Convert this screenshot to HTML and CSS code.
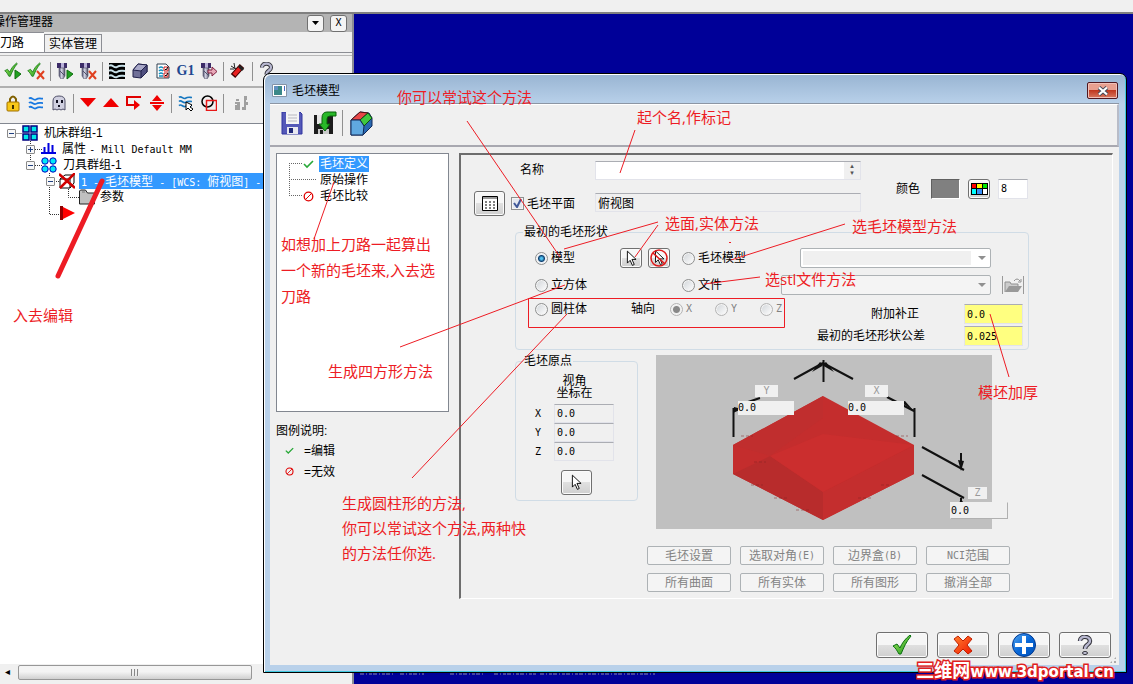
FILE: index.html
```html
<!DOCTYPE html>
<html lang="zh-CN">
<head>
<meta charset="utf-8">
<title>毛坯模型</title>
<link rel="stylesheet" href="styles.css">
</head>
<body>
<svg class="defs" aria-hidden="true">
  <defs>
    <linearGradient id="gGreen" x1="0" y1="0" x2="1" y2="1"><stop offset="0" stop-color="#a8f060"/><stop offset="1" stop-color="#189018"/></linearGradient>
    <linearGradient id="gBlue" x1="0" y1="0" x2="1" y2="1"><stop offset="0" stop-color="#58a8f0"/><stop offset=".5" stop-color="#0868d8"/><stop offset="1" stop-color="#0050b8"/></linearGradient>
    <linearGradient id="gRed" x1="0" y1="0" x2="1" y2="1"><stop offset="0" stop-color="#ff8030"/><stop offset="1" stop-color="#f01800"/></linearGradient>
    <linearGradient id="gTool" x1="0" y1="0" x2="1" y2="0"><stop offset="0" stop-color="#50506c"/><stop offset=".45" stop-color="#d8d8e8"/><stop offset="1" stop-color="#484860"/></linearGradient>
    <symbol id="tick" viewBox="0 0 20 20"><path d="M1 11l4-2 3 4C10 8 13 4 18 0l1 1C14 7 12 12 9 19H7C5 16 4 13 1 11z" fill="url(#gGreen)" stroke="#0a7010"/></symbol>
    <symbol id="bit" viewBox="0 0 12 16"><path d="M0 0h10v5H0z" fill="#3c2c68"/><path d="M4 0h3v5H4z" fill="#b8b0d8"/><path d="M2 5h6v8l-2 3H4l-2-3z" fill="url(#gTool)" stroke="#50506a" stroke-width=".6"/><path d="M3 8l4 4" stroke="#50506a"/></symbol>
    <symbol id="arrow" viewBox="0 0 12 18"><path d="M1.500 1v13l3-3 2.500 5.500 2-1L6.500 10H11z" fill="#fff" stroke="#000"/></symbol>
    <symbol id="query" viewBox="0 0 16 20"><path d="M3 6C3 0 13 1 13 6c0 4-5 3-5 8" fill="none" stroke="#303038" stroke-width="4.500"/><path d="M3 6C3 0 13 1 13 6c0 4-5 3-5 8" fill="none" stroke="#b8b8d0" stroke-width="2.500"/><ellipse cx="8" cy="18" rx="2.500" ry="1.500" fill="#c8c8dc" stroke="#303038"/></symbol>
    <symbol id="waves" viewBox="0 0 16 16"><path d="M0 3c3-3 5 3 8 1s5-1 8-1M0 8c3-3 5 3 8 1s5-1 8-1M0 13c3-3 5 3 8 1s5-1 8-1" fill="none" stroke="currentColor" stroke-width="2"/></symbol>
    <symbol id="ban" viewBox="0 0 11 11"><circle cx="5.500" cy="5.500" r="4.300" fill="none" stroke="#e00000" stroke-width="1.300"/><path d="M2.500 8.500l6-6" stroke="#e00000"/></symbol>
    <symbol id="check" viewBox="0 0 11 9"><path d="M1 4l3 3 6-6" fill="none" stroke="#28a838" stroke-width="1.600"/></symbol>
  </defs>
</svg>

<div class="app">
  <div class="app-strip"></div>
  <div class="workspace">
    <aside class="manager">
      <header class="manager-title">
        <span class="manager-name">操作管理器</span>
        <button class="mini" aria-label="菜单"><svg width="7" height="4"><path d="M0 0h7L3.500 4z"/></svg></button>
        <button class="mini mono">X</button>
      </header>
      <nav class="tabs">
        <button class="tab active">刀路</button><button class="tab">实体管理</button>
      </nav>
      <div class="tools">
        <button class="tool" aria-label="选择全部"><svg width="18" height="18"><use href="#tick" width="14" height="16"/><path d="M11 8l6 4-6 5z" fill="#20a020" stroke="#107010"/></svg></button>
        <button class="tool" aria-label="取消选择"><svg width="18" height="18"><use href="#tick" width="14" height="16"/><path d="M10 9l7 8M17 9l-7 8" stroke="#e04020" stroke-width="2"/></svg></button>
        <i class="sep"></i>
        <button class="tool" aria-label="重新计算"><svg width="18" height="18"><use href="#bit" x="1" y="1" width="12" height="16"/><path d="M11 8l6 4-6 5z" fill="#20a020" stroke="#107010"/></svg></button>
        <button class="tool" aria-label="重新计算无效"><svg width="18" height="18"><use href="#bit" x="1" y="1" width="12" height="16"/><path d="M10 9l7 8M17 9l-7 8" stroke="#e04020" stroke-width="2"/></svg></button>
        <i class="sep"></i>
        <button class="tool" aria-label="模拟"><svg width="16" height="16"><path fill="#000" d="M0 0h16v16H0z"/><use href="#waves" width="16" height="16" color="#c8e0e8"/></svg></button>
        <button class="tool" aria-label="验证"><svg width="16" height="16"><path d="M1 7l5-6 9 1v7l-6 6-8-1z" fill="#707098" stroke="#20204a"/><path d="M1 7l5-6 9 1-6 6z" fill="#a8a8c8" stroke="#20204a"/><path d="M9 8v7l6-6V2z" fill="#505080" stroke="#20204a"/></svg></button>
        <button class="tool" aria-label="选项"><svg width="14" height="16"><path d="M1 1h9l3 3v11H1z" fill="#fff" stroke="#304050"/><path d="M3 5q2-2 4 0M3 8q2-2 4 0M3 11q2-2 4 0M3 13h4" stroke="#1090c0" stroke-width="1.500" fill="none"/><path d="M8 4h4v4H8zM8 10h4v4H8z" fill="#fff" stroke="#d01818"/><path d="M9 6l1 1 2-3M9 12l1 1 2-3" stroke="#000" fill="none"/></svg></button>
        <button class="tool g1">G1</button>
        <button class="tool" aria-label="进给"><svg width="18" height="18"><use href="#bit" x="1" y="1" width="12" height="16"/><path d="M8 8h4V5l5 4.500-5 4.500v-3H8z" fill="#e8a8b8" stroke="#802040"/></svg></button>
        <i class="sep"></i>
        <button class="tool" aria-label="高速"><svg width="16" height="16"><path d="M3 13L12 3" stroke="#400" stroke-width="6"/><path d="M4 12l7-8" stroke="#e82020" stroke-width="4"/><path d="M9 3l4 4" stroke="#222" stroke-width="3"/><path d="M1 3l5 3M4 0l1 6M0 6h4" stroke="#222"/></svg></button>
        <i class="sep"></i>
        <button class="tool" aria-label="帮助"><svg width="15" height="18"><use href="#query" width="15" height="18"/></svg></button>
      </div>
      <div class="tools second">
        <button class="tool" aria-label="锁定"><svg width="14" height="17"><path d="M4 8V4q3-5 6 0v4" fill="none" stroke="#806000" stroke-width="2"/><rect x="1" y="7" width="12" height="9" rx="1" fill="#f8c818" stroke="#a07000"/><path d="M7 10v4" stroke="#403000" stroke-width="2"/></svg></button>
        <button class="tool" aria-label="显示刀路"><svg width="16" height="14"><use href="#waves" width="16" height="14" color="#1878e0"/></svg></button>
        <button class="tool" aria-label="隐藏后处理"><svg width="14" height="16"><path d="M1 15V6q0-5 6-5t6 5v9l-2-1-2 1-2-1-2 1-2-1z" fill="#d0d0e0" stroke="#505068"/><path d="M4 5h2v3H4zM9 5h2v3H9zM6 10h2v2H6z" fill="#101020"/></svg></button>
        <i class="sep"></i>
        <button class="tool" aria-label="下移"><svg width="16" height="10"><path d="M0 0h16L8 9z" fill="#f00000"/></svg></button>
        <button class="tool" aria-label="上移"><svg width="16" height="10"><path d="M0 9h16L8 0z" fill="#f00000"/></svg></button>
        <button class="tool" aria-label="插入"><svg width="16" height="16"><path d="M15 2H1v8h8" fill="none" stroke="#e00000" stroke-width="2"/><path d="M8 5l6 5-6 5z" fill="#f00000"/></svg></button>
        <button class="tool" aria-label="滚动"><svg width="16" height="16"><path d="M3 6l5-6 5 6zM3 10l5 6 5-6zM1 7h14v2H1z" fill="#f00000"/></svg></button>
        <i class="sep"></i>
        <button class="tool" aria-label="选择刀路"><svg width="16" height="16"><use href="#waves" width="15" height="13" color="#1878c0"/><path d="M8 7v8l2-2 3 3 2-2-3-2 2-2z" fill="#fff" stroke="#000"/></svg></button>
        <button class="tool" aria-label="选择图形"><svg width="16" height="16"><circle cx="6.500" cy="6.500" r="5.500" fill="none" stroke="#000" stroke-width="1.500"/><path d="M5.500 5.500h10v10h-10z" fill="none" stroke="#e81818" stroke-width="1.500"/></svg></button>
        <i class="sep wide-sep"></i>
        <button class="tool" aria-label="机床"><svg width="14" height="14" fill="#a0a0a0"><path d="M1 3h3v2H1zM0 6h5v8H0V9h2V8H0zM9 0h3v4h-1v2h2v3h-2v5H7v-3h2z"/></svg></button>
      </div>
      <div class="tree">
        <svg class="tree-lines" width="90" height="96"><path d="M15.500 8.500H22M30.500 16v26M35 24.500h7M35 40.500h7M49.500 48v41.500H60M54 56.500h6M68.500 64v8.500H79" fill="none" stroke="#333" stroke-dasharray="1 1"/></svg>
        <ul class="nodes">
          <li class="node l0"><button class="toggle" aria-label="折叠"><svg width="7" height="7"><path d="M1 3.500h5" stroke="#204080"/></svg></button><svg width="16" height="16"><path d="M1 1h6v6H1zM9 1h6v6H9zM1 9h6v6H1zM9 9h6v6H9z" fill="#00e8e8" stroke="#000080" stroke-width="1.500"/></svg><span>机床群组-1</span></li>
          <li class="node l1"><button class="toggle" aria-label="展开"><svg width="7" height="7"><path d="M1 3.500h5M3.500 1v5" stroke="#204080"/></svg></button><svg width="15" height="16"><path d="M0 12h15M3.500 12V6M7.500 12V2M11.500 12V4" stroke="#0000e0" stroke-width="2"/></svg><span>属性 <span class="mono">- Mill Default MM</span></span></li>
          <li class="node l1"><button class="toggle" aria-label="折叠"><svg width="7" height="7"><path d="M1 3.500h5" stroke="#204080"/></svg></button><svg width="16" height="16" fill="#00e8f8" stroke="#0000c0"><circle cx="4" cy="4" r="3.200"/><circle cx="12" cy="4" r="3.200"/><circle cx="4" cy="12" r="3.200"/><circle cx="12" cy="12" r="3.200"/></svg><span>刀具群组-1</span></li>
          <li class="node l2"><button class="toggle" aria-label="折叠"><svg width="7" height="7"><path d="M1 3.500h5" stroke="#204080"/></svg></button><svg width="16" height="16"><path d="M1 6l5-4h9v8l-4 5H1zM1 6h10v9M11 6l4-4" fill="#fff" stroke="#000"/><path d="M0 1l16 14M16 0L1 15" stroke="#d00000" stroke-width="2.500"/></svg><span class="picked"><span class="mono">1 - </span>毛坯模型<span class="mono"> - [WCS: </span>俯视图<span class="mono">] -</span></span></li>
          <li class="node l3"><svg width="17" height="16"><path d="M.5 15V2l1-1h5l2 3h7v11z" fill="#c0c0c0" stroke="#222"/><path d="M3 3h3" stroke="#777"/></svg><span>参数</span></li>
          <li class="node l2b"><svg width="16" height="16"><path d="M0 1h3v14H0z" fill="#900000"/><path d="M3 2l12 6-12 6z" fill="#f00"/></svg></li>
        </ul>
      </div>
      <div class="scroll"><span class="scroll-arrow">◂</span><div class="thumb"><i></i><i></i><i></i></div></div>
    </aside>
    <main class="canvas"></main>
  </div>
</div>
<svg class="status-marks" width="300" height="2"><path d="M0 1h34M40 1h24M90 1h35M134 1h42M180 1h115" stroke="#8a8aa8" stroke-width="1" stroke-dasharray="4 2 1 2 3 1"/></svg>

<section class="dialog" role="dialog" aria-labelledby="dlgTitle">
  <header class="titlebar">
    <svg width="15" height="13"><path d="M.5.5h14v12H.5z" fill="#fff" stroke="#8494a8"/><path d="M2 2h8v9H2z" fill="#3a8888"/><path d="M2 2h4v4H2z" fill="#6090c0"/><path d="M12.500 2v5" stroke="#4868c0"/></svg>
    <h1 id="dlgTitle">毛坯模型</h1>
    <button class="close" aria-label="关闭"><svg width="12" height="10"><path d="M2 1.500l8 7M10 1.500l-8 7" stroke="#404858" stroke-width="4"/><path d="M2 1.500l8 7M10 1.500l-8 7" stroke="#fff" stroke-width="2.300"/></svg></button>
  </header>
  <div class="client">
    <div class="dialog-tools">
      <button class="plain" aria-label="保存"><svg width="22" height="23"><path d="M1 0h18l2 2v20H1z" fill="#5458b8" stroke="#3034a0"/><path d="M5 0h13v12H5z" fill="#f4f4f4"/><path d="M7 3h9M7 6h9M7 9h9" stroke="#b8b8c0"/><path d="M6 15h11v7H6z" fill="#e8e8f0"/><path d="M8 16h4v5H8z" fill="#202878"/></svg></button>
      <button class="plain" aria-label="另存"><svg width="24" height="24"><path d="M1 4h19v19H1z" fill="#1c1c1c"/><path d="M4 4h7v9H4z" fill="#e4e4e4"/><path d="M5 18h11v5H5z" fill="#c8c8c8"/><path d="M7 19h3v4H7z" fill="#1c1c1c"/><path d="M23 1h-9Q9 1 9 7v6H6l6 7 5-7h-3V8q0-3 3-3h6z" fill="#28b828" stroke="#086008"/></svg></button>
      <i class="sep tall"></i>
      <button class="plain" aria-label="毛坯"><svg width="23" height="25"><path d="M1 9L10 1l9 1 3 5v8l-9 9H1z" fill="#2868b0" stroke="#102858"/><path d="M1 9L10 1l8 1-8 7z" fill="#e84848" stroke="#501010"/><path d="M10 9l8-7 4 5-8 8z" fill="#40c840" stroke="#105010"/><path d="M1 9h9l4 6-1 9H1z" fill="#60a8e0" stroke="#102858"/></svg></button>
    </div>
    <div class="content">
      <div class="side">
        <div class="pages">
          <svg class="page-lines" width="40" height="48"><path d="M.5 8v33M0 8.500h14M0 24.500h28M0 40.500h14" fill="none" stroke="#666" stroke-dasharray="1 1"/></svg>
          <ul class="page-list">
            <li><svg width="11" height="9"><use href="#check" width="11" height="9"/></svg><a class="page current" href="#define">毛坯定义</a></li>
            <li><span class="gap"></span><a class="page" href="#source">原始操作</a></li>
            <li><svg width="11" height="11"><use href="#ban" width="11" height="11"/></svg><a class="page" href="#compare">毛坯比较</a></li>
          </ul>
        </div>
        <p class="legend-title">图例说明:</p>
        <p class="legend-row"><svg width="9" height="8" viewBox="0 0 11 9"><use href="#check" width="11" height="9"/></svg>=编辑</p>
        <p class="legend-row"><svg width="9" height="9" viewBox="0 0 11 11"><use href="#ban" width="11" height="11"/></svg>=无效</p>
      </div>

      <form class="panel" id="define" onsubmit="return false">
        <div class="head">
          <label class="name-label" for="name">名称</label>
          <div class="spin"><input class="field" id="name" type="text"><span class="spin-buttons"><b>▴</b><b>▾</b></span></div>
          <button class="push wide grid-btn" type="button" aria-label="平面列表"><svg width="16" height="15"><path d="M.5.5h15v14H.5z" fill="#fff" stroke="#000"/><path d="M1 1h14v2H1z" fill="#999"/><path d="M3 6h10M3 9h10M3 12h10" stroke="#000" stroke-dasharray="2 2"/></svg></button>
          <label class="option"><input type="checkbox" class="box" checked>毛坯平面</label>
          <input class="field flat plane" type="text" value="俯视图" readonly aria-label="毛坯平面">
          <div class="color">
            <label for="color">颜色</label>
            <span class="swatch"></span>
            <button class="push" type="button" aria-label="选择颜色"><svg width="17" height="12"><path d="M0 0h17v12H0z"/><path d="M1 1h4v4H1z" fill="red"/><path d="M6 1h5v4H6z" fill="#ff0"/><path d="M12 1h4v4h-4z" fill="#00e800"/><path d="M1 6h4v5H1z" fill="#0ff"/><path d="M6 6h5v5H6z" fill="#3890f8"/><path d="M12 6h4v5h-4z" fill="#fff"/></svg></button>
            <input class="field mono color-no" id="color" type="text" value="8">
          </div>
        </div>

        <fieldset class="group shape">
          <legend>最初的毛坯形状</legend>
          <div class="shape-grid">
            <label class="option"><input type="radio" name="shape" checked>模型</label>
            <div class="pair">
              <button class="push" type="button" aria-label="选取"><svg width="11" height="17"><use href="#arrow" width="11" height="17"/></svg></button>
              <button class="push" type="button" aria-label="取消选取"><svg width="18" height="18"><use href="#arrow" x="4" y="1" width="11" height="16"/><circle cx="9" cy="9" r="8" fill="none" stroke="#e01818" stroke-width="1.500"/><path d="M3 4l12 11" stroke="#e01818" stroke-width="1.500"/></svg></button>
            </div>
            <div class="choice"><label class="option"><input type="radio" name="shape">毛坯模型</label><select class="drop white" disabled aria-label="毛坯模型"></select></div>
            <label class="option first"><input type="radio" name="shape">立方体</label>
            <div class="choice second-row"><label class="option"><input type="radio" name="shape">文件</label><select class="drop long" disabled aria-label="文件"></select></div>
            <button class="open" type="button" disabled aria-label="打开文件"><svg width="19" height="15"><path d="M1 14V4h5l1 2h7v3" fill="#ccc" stroke="#909090"/><path d="M1 14l4-6h13l-4 6z" fill="#999"/><path d="M10 3q3-4 6 0M17 1v3h-3" stroke="#909090" fill="none"/></svg></button>
          </div>
          <div class="shape-foot">
            <div class="axis">
              <label class="option"><input type="radio" name="shape">圆柱体</label>
              <span class="axis-title">轴向</span>
              <label class="option mono off"><input type="radio" name="axis" checked disabled>X</label>
              <label class="option mono off"><input type="radio" name="axis" disabled>Y</label>
              <label class="option mono off"><input type="radio" name="axis" disabled>Z</label>
            </div>
            <div class="numbers">
              <label class="offset-label" for="extra">附加补正</label><input class="field yellow mono" id="extra" type="text" value="0.0">
              <label for="tol">最初的毛坯形状公差</label><input class="field yellow mono" id="tol" type="text" value="0.025">
            </div>
          </div>
        </fieldset>

        <div class="lower">
          <fieldset class="group origin">
            <legend>毛坯原点</legend>
            <p class="origin-title">视角<br>坐标在</p>
            <div class="coords mono">
              <label for="ox">X</label><input class="field flat mono" id="ox" value="0.0">
              <label for="oy">Y</label><input class="field flat mono" id="oy" value="0.0">
              <label for="oz">Z</label><input class="field flat mono" id="oz" value="0.0">
            </div>
            <button class="push wide" type="button" aria-label="选取原点"><svg width="11" height="17"><use href="#arrow" width="11" height="17"/></svg></button>
          </fieldset>
          <div class="preview">
            <svg width="336" height="174">
              <path d="M167 41l91 49v29l-91 46-90-46V90z" fill="#c42d2d"/>
              <path d="M77 119l37-18 53 36v28z" fill="#b82c2c"/><path d="M258 90v29l-91 46v-28z" fill="#c42e2e"/><path d="M114 101l53-22 91 11-91 47z" fill="#cb2e2e"/><path d="M167 41v22l-53 38-37-11z" fill="#c02e2e"/>
              <g stroke="#111" stroke-width="2" fill="none"><path d="M167.500 5v22M138 24l29-16 30 16M77.500 53v29M92 47l12-4M258.500 53v29M231 42l27 14M266 92l42 23M266 120l42 23M305 98v16M305 143v10"/></g>
              <path d="M156 17l8-10 4 3zM178 17L170 7l-4 3zM77 58l9-4-8-2zM257 55l-8-9-5 1zM302 105l6 1-3 10zM302 150l3-6 4 6z" fill="#111"/>
              <path d="M85 81h12M98 107h12M95 130h12M118 143h14M140 155h14M240 81h12M225 130h10M202 143h14" stroke="#802020" stroke-width=".5" stroke-dasharray="3 2"/>
            </svg>
            <button class="tag tag-y mono" type="button" disabled>Y</button><input class="over over-y mono" value="0.0" aria-label="Y 尺寸">
            <button class="tag tag-x mono" type="button" disabled>X</button><input class="over over-x mono" value="0.0" aria-label="X 尺寸">
            <button class="tag tag-z mono" type="button" disabled>Z</button><input class="over over-z mono" value="0.0" aria-label="Z 尺寸">
          </div>
        </div>

        <div class="actions">
          <button type="button" disabled>毛坯设置</button>
          <button type="button" disabled>选取对角<span class="mono">(E)</span></button>
          <button type="button" disabled>边界盒<span class="mono">(B)</span></button>
          <button type="button" disabled><span class="mono">NCI</span>范围</button>
          <button type="button" disabled>所有曲面</button>
          <button type="button" disabled>所有实体</button>
          <button type="button" disabled>所有图形</button>
          <button type="button" disabled>撤消全部</button>
        </div>
      </form>
    </div>
    <footer class="footer">
      <button class="push big" aria-label="确定"><svg width="20" height="20"><use href="#tick" width="20" height="20"/></svg></button>
      <button class="push big" aria-label="取消"><svg width="20" height="20"><path d="M1 4l4-3 5 5 5-5 4 3-5 6 5 6-4 3-5-5-5 5-4-3 5-6z" fill="url(#gRed)" stroke="#c02000"/></svg></button>
      <button class="push big" aria-label="新建"><svg width="24" height="24"><circle cx="12" cy="12" r="11.500" fill="url(#gBlue)" stroke="#003890"/><path d="M12 3v18M3 12h18" stroke="#fff" stroke-width="4"/></svg></button>
      <button class="push big" aria-label="帮助"><svg width="18" height="20"><use href="#query" width="18" height="20"/></svg></button>
    </footer>
    <i class="grip"></i>
  </div>
</section>

<div class="notes">
  <svg class="note-lines" width="1133" height="684">
    <g fill="none" stroke="#ed1c24" stroke-width="1">
      <path d="M467 121l93 136M635 130l-15 43M334 182l-20 57M658 222l-94 27M658 225l-23 32M845 224l-114 36M760 277l-56 7M400 347l165-62M412 478l155-164M990 314l19 63"/>
      <path d="M528.500 298.500h256v29h-256zM729 242.500h2"/>
      <path d="M102 181L58 276" stroke-width="5" stroke-linecap="round"/>
    </g>
  </svg>
  <p class="note n1">你可以常试这个方法</p>
  <p class="note n2">起个名,作标记</p>
  <p class="note n3">选面,实体方法</p>
  <p class="note n4">选毛坯模型方法</p>
  <p class="note n5">选stl文件方法</p>
  <p class="note n6">如想加上刀路一起算出<br>一个新的毛坯来,入去选<br>刀路</p>
  <p class="note n7">生成四方形方法</p>
  <p class="note n8">生成圆柱形的方法,<br>你可以常试这个方法,两种快<br>的方法任你选.</p>
  <p class="note n9">模坯加厚</p>
  <p class="note n10">入去编辑</p>
  <p class="watermark"><span class="wm-cn">三维网</span>www.3dportal.cn</p>
</div>
</body>
</html>
```
FILE: styles.css
```css
* { box-sizing: border-box; }
html, body { height: 100%; }
body {
  margin: 0;
  overflow: hidden;
  position: relative;
  background: #000098;
  color: #000;
  font: 12px/16px "Liberation Sans", "Noto Sans CJK SC", sans-serif;
}
button, input, select { font: inherit; color: inherit; margin: 0; padding: 0; }
button { border: 0; background: none; display: flex; align-items: center; justify-content: center; white-space: nowrap; }
p, ul, h1 { margin: 0; padding: 0; list-style: none; }
svg { display: block; flex: none; }
.mono { font-family: "DejaVu Sans Mono", "Noto Sans CJK SC", monospace; font-size: 10px; white-space: pre; }
.defs { position: absolute; width: 0; height: 0; }

/* main window */
.app { display: flex; flex-direction: column; height: 100%; }
.app-strip { height: 14px; background: #f0f0f0; border-bottom: 2px solid #808080; flex: none; }
.workspace { display: flex; flex: 1; min-height: 0; }
.canvas { flex: 1; background: #000098; }
.manager {
  width: 354px;
  display: flex;
  flex-direction: column;
  background: #f0f0f0;
  border-right: 2px solid #8c8c94;
  padding-bottom: 4px;
  overflow: hidden;
}
.manager-title { display: flex; gap: 6px; height: 18px; background: #b4b4b4; padding-right: 5px; align-items: center; flex: none; }
.manager-name { flex: 1; margin-left: -7px; align-self: flex-start; line-height: 17px; }
.mini { width: 17px; height: 17px; background: #f4f4f4; border: 1px solid #707070; border-radius: 3px; }
.tabs { display: flex; align-items: flex-end; height: 21px; border-bottom: 1px solid #8c8e94; flex: none; }
.tab { height: 18px; padding: 0 4px; border: 1px solid #8c8e94; border-bottom: 0; }
.tab.active { height: 20px; width: 44px; background: #fff; border-left: 0; border-right: 0; padding: 0; justify-content: flex-start; }
.tools { display: flex; align-items: center; height: 33px; margin-top: 2px; padding: 0 0 0 1px; border-top: 1px solid #b8b8b8; border-bottom: 2px solid #b0b0b0; flex: none; }
.tools.second { margin-top: 0; height: 30px; border-top: 0; border-bottom: 0; }
.tool { width: 23px; height: 22px; flex: none; }
.g1 { font: bold 14px/16px "Liberation Serif", serif; color: #204890; }
.sep { width: 1px; height: 19px; background: #909090; margin: 0 2px 0 3px; flex: none; }
.wide-sep { margin-right: 6px; }

.tree { position: relative; flex: 1; background: #fff; border-top: 1px solid #828790; margin: 5px 4px 0 0; padding-top: 1px; }
.tree-lines { position: absolute; left: 0; top: 1px; }
.nodes { position: relative; }
.node { display: flex; align-items: center; height: 16px; gap: 6px; line-height: 18px; white-space: nowrap; }
.l0 { padding-left: 7px; }
.l1 { padding-left: 26px; }
.l2 { padding-left: 46px; gap: 4px; }
.l3 { padding-left: 79px; gap: 4px; }
.l2b { padding-left: 60px; }
.toggle { width: 9px; height: 9px; background: #f8f8f8; border: 1px solid #8a8a8a; border-radius: 1px; flex: none; }
.picked { flex: 1; background: #3399ff; color: #fff; padding-left: 2px; height: 16px; }
.scroll { display: flex; height: 16px; margin-right: 4px; background: #f0f0f0; align-items: center; flex: none; }
.scroll-arrow { width: 14px; margin-right: 4px; text-align: center; font-size: 10px; }
.thumb { width: 234px; height: 15px; display: flex; gap: 1px; align-items: center; justify-content: center; border: 1px solid #979797; border-radius: 2px; background: linear-gradient(#f4f4f4 45%, #d0d0d0); }
.thumb i { width: 2px; height: 7px; background: #888; border-right: 1px solid #eee; }
.status-marks { position: absolute; left: 360px; bottom: 9px; }

/* stock model dialog */
.dialog {
  position: absolute;
  left: 263px;
  right: 6px;
  top: 73px;
  bottom: 11px;
  display: flex;
  flex-direction: column;
  padding: 0 7px 7px 6px;
  border: 1px solid #000;
  border-radius: 7px 7px 0 0;
  background: linear-gradient(#98b4d2, #b9d1ea 30px);
  box-shadow: inset 1px 1px #fff, inset -1px -1px #40c8e0;
}
.titlebar { display: flex; align-items: center; gap: 5px; height: 29px; padding: 4px 1px 0 2px; flex: none; }
.titlebar h1 { flex: 1; font-size: 12px; font-weight: normal; line-height: 18px; }
.close { width: 31px; height: 17px; border: 1px solid #501820; border-radius: 2px; box-shadow: inset 0 0 0 1px #f0c0b8; background: linear-gradient(#e8a090 45%, #c03820 50%, #d87860); }
.client { position: relative; flex: 1; display: flex; flex-direction: column; background: #f0f0f0; border-top: 1px solid #8c96a4; }
.dialog-tools { display: flex; align-items: center; height: 43px; gap: 10px; padding: 0 0 4px 11px; border-top: 1px solid #fff; border-bottom: 2px solid #a8a8b0; border-right: 2px solid #b8bcc8; flex: none; }
.sep.tall { height: 26px; margin: 0 -3px 0 -5px; }
.content { display: grid; grid-template-columns: 173px 1fr; gap: 10px; padding: 6px 6px 0; }
.pages { position: relative; height: 259px; background: #fff; border: 1px solid #828790; padding: 2px 0 0 26px; }
.page-lines { position: absolute; left: 12px; top: 1px; }
.page-list { position: relative; }
.page-list li { display: flex; align-items: center; height: 16px; gap: 5px; }
.page { color: #000; text-decoration: none; padding: 0 1px; line-height: 16px; }
.page.current { background: #3399ff; color: #fff; }
.gap { width: 11px; }
.legend-title { margin: 11px 0 1px; }
.legend-row { display: flex; align-items: center; gap: 10px; padding-left: 9px; height: 21px; }

.panel { border: 1px solid #fff; border-left: 2px solid #6d6d6d; border-top: 2px solid #6d6d6d; padding: 6px 0 6px 13px; }
.head { display: grid; grid-template-columns: 31px 78px 266px auto; grid-template-rows: 18px 25px; gap: 12px 6px; justify-content: start; align-items: center; }
.name-label { grid-column: 2; padding-left: 9px; }
.field { width: 100%; height: 19px; border: 1px solid #e2e3ea; border-top-color: #abadb3; background: #fff; padding: 0 2px; outline: 0; }
.flat { background: #f0f0f0; }
.plane { align-self: start; margin-top: 2px; }
.spin { position: relative; grid-column: 3; }
.spin-buttons { position: absolute; right: 1px; top: 1px; width: 16px; height: 17px; background: #f0f0f0; display: flex; flex-direction: column; align-items: center; justify-content: center; color: #555; }
.spin-buttons b { font: 7px/7px "DejaVu Sans", sans-serif; }
.color { grid-column: 4; grid-row: 1 / 3; display: flex; align-items: center; gap: 8px; padding-left: 29px; }
.color label { margin-right: 3px; }
.color-no { width: 30px; height: 20px; }
.swatch { width: 29px; height: 20px; background: #808080; border: 1px solid #fff; border-top-color: #606060; border-left-color: #606060; }
.push { width: 22px; height: 20px; border: 1px solid #707070; border-radius: 3px; background: linear-gradient(#f6f6f6 48%, #e0e0e0 50%, #cfcfcf); box-shadow: inset 0 0 0 1px #fbfbfb; flex: none; }
.push.wide { width: 31px; height: 25px; }
.push.big { width: 52px; height: 26px; }
.option { display: flex; align-items: center; gap: 3px; line-height: 18px; }
.option input { appearance: none; width: 13px; height: 13px; border: 1px solid #8e8f8f; background: linear-gradient(135deg, #d0d4d8, #fff); box-shadow: inset 0 0 0 1px #f4f4f4; flex: none; }
.option input[type="radio"] { border-radius: 50%; }
.option input[type="radio"]:checked { background: radial-gradient(circle, #50c0f0 1px, #104070 3px, #e8eef4 4px); }
.option input[type="radio"]:disabled { border-color: #b4b4b4; }
.option input[type="radio"]:checked:disabled { background: radial-gradient(circle, #888 3px, #eee 4px); }
.option .box:checked { background: #e4e8f0 url("data:image/svg+xml,%3Csvg xmlns='http://www.w3.org/2000/svg' viewBox='0 0 11 11'%3E%3Cpath d='M2 5l3 4 4-8' fill='none' stroke='%23405898' stroke-width='2'/%3E%3C/svg%3E") center / 11px no-repeat; }
.off { color: #808080; }

.group { min-width: 0; margin: 0; padding: 0; border: 1px solid #d0dce6; border-radius: 4px; }
.group legend { margin-left: 7px; padding: 0 1px; line-height: 16px; }
.shape { width: 514px; margin: 8px 0 0 41px; padding-left: 19px; }
.shape legend { margin-left: -12px; }
.shape-grid { display: grid; grid-template-columns: 85px 62px 309px 22px; grid-template-rows: 20px 20px; row-gap: 7px; margin-top: 8px; align-items: center; }
.first { grid-column: 1; }
.pair { display: flex; gap: 6px; }
.choice { display: flex; justify-content: space-between; align-items: center; }
.second-row { grid-column: 3; }
.open { width: 22px; height: 18px; margin-left: 11px; border-left: 1px solid #999; border-right: 1px solid #999; }
.drop { appearance: none; width: 191px; height: 20px; border: 1px solid #adb2b5; border-radius: 2px; background: #f4f4f4 url("data:image/svg+xml,%3Csvg xmlns='http://www.w3.org/2000/svg' viewBox='0 0 8 4'%3E%3Cpath d='M0 0h8L4 4z' fill='%23909090'/%3E%3C/svg%3E") no-repeat right 4px center / 8px 4px; opacity: 1; }
.drop.white { background-color: #fff; box-shadow: inset 0 0 0 2px #fff, inset 170px 0 #f0f0f0; }
.drop.long { width: 210px; }
.shape-foot { display: flex; justify-content: space-between; padding-right: 5px; }
.axis { display: flex; align-items: center; height: 18px; margin-top: 5px; }
.axis > .option:first-child { width: 96px; }
.axis .off { width: 45px; }
.axis-title { width: 39px; line-height: 18px; }
.numbers { display: grid; grid-template-columns: auto 59px; column-gap: 39px; row-gap: 2px; align-items: center; justify-items: end; margin: 9px 0 3px; }
.offset-label { padding-right: 6px; }
.numbers .field { height: 20px; }
.yellow { background: #ffff80; }

.lower { display: flex; align-items: flex-start; gap: 18px; margin: 3px 0 0 41px; }
.origin { width: 123px; display: flex; flex-direction: column; align-items: center; padding-bottom: 5px; }
.origin-title { text-align: center; line-height: 12px; margin: 6px 4px 0 0; }
.coords { display: grid; grid-template-columns: 16px 60px; column-gap: 3px; align-items: center; margin: 5px 4px 9px 0; }
.preview { position: relative; width: 336px; height: 174px; background: #c0c0c0; margin-top: 2px; }
.tag { position: absolute; width: 23px; height: 12px; background: #f0f0f0; color: #999; }
.tag-y { left: 99px; top: 30px; }
.tag-x { left: 209px; top: 30px; }
.tag-z { left: 312px; top: 132px; width: 19px; }
.over { position: absolute; width: 56px; height: 14px; border: 0; background: #f0f0f0; padding: 0; }
.over-y { left: 82px; top: 46px; }
.over-x { left: 192px; top: 46px; }
.over-z { left: 294px; top: 147px; width: 58px; height: 17px; border: 1px solid #f0f0f0; border-right-color: #b0b0b0; border-bottom-color: #b0b0b0; }
.actions { display: grid; grid-template-columns: repeat(4, 84px); gap: 8px 9px; margin: 17px 0 0 173px; }
.actions button { height: 19px; border: 1px solid #adb2b5; border-radius: 2px; background: #f4f4f4; color: #838383; }
.footer { display: flex; justify-content: flex-end; gap: 9px; margin-top: auto; padding: 0 8px 7px 0; }
.grip { position: absolute; right: 2px; bottom: 1px; width: 8px; height: 8px; background: radial-gradient(#aaa 1px, transparent 1px) 0 0 / 4px 4px; clip-path: polygon(100% 0, 100% 100%, 0 100%); }

/* red annotations over the windows */
.notes { position: absolute; inset: 0; pointer-events: none; overflow: hidden; }
.note-lines { position: absolute; left: 0; top: 0; }
.note { position: absolute; font: 15px/26px "Open Sans", "Noto Sans CJK SC", sans-serif; color: #ed1c24; white-space: nowrap; }
.n1 { left: 397px; top: 84px; }
.n2 { left: 637px; top: 104px; }
.n3 { left: 665px; top: 210px; }
.n4 { left: 852px; top: 213px; }
.n5 { left: 765px; top: 266px; }
.n6 { left: 281px; top: 231px; }
.n7 { left: 328px; top: 358px; }
.n8 { left: 342px; top: 491px; line-height: 25px; }
.n9 { left: 978px; top: 379px; }
.n10 { left: 13px; top: 302px; }
.watermark { position: absolute; right: 19px; bottom: 2px; font: bold 15px/20px "DejaVu Sans", "Noto Sans CJK SC", sans-serif; color: #fff; -webkit-text-stroke: 3px #e02020; paint-order: stroke fill; white-space: nowrap; }
.wm-cn { font-size: 18px; }
```
